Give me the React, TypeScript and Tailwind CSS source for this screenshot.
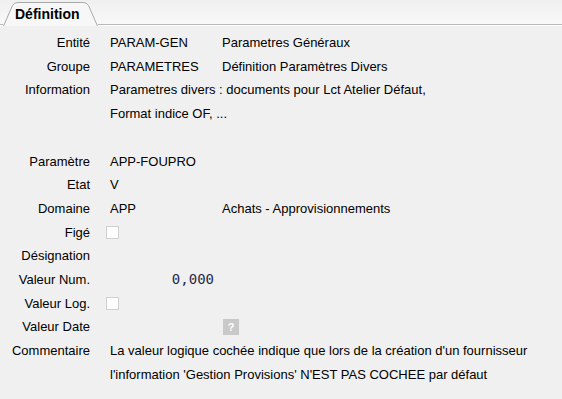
import { ReactNode } from "react";

interface RowProps {
  label?: string;
  value?: ReactNode;
  extra?: ReactNode;
  wide?: ReactNode;
}

const Row = ({ label, value, extra, wide }: RowProps) => {
  return (
    <div className="grid h-[23.7px] grid-cols-[110px_112px_1fr] items-center whitespace-nowrap">
      <div className="pr-[20px] text-right">{label}</div>
      {wide !== undefined ? (
        <div className="col-span-2">{wide}</div>
      ) : (
        <>
          <div className="flex items-center">{value}</div>
          <div className="flex items-center">{extra}</div>
        </>
      )}
    </div>
  );
};

const CheckBox = () => (
  <span className="ml-[-4px] inline-block h-[13px] w-[13px] border border-[#cfcfcf] bg-white" />
);

export default function App() {
  return (
    <div
      className="h-[399px] w-[562px] overflow-hidden bg-[#f0f0f0] text-[13px] text-black"
      style={{ fontFamily: '"Liberation Sans", Arial, sans-serif' }}
    >
      <div className="flex h-[26px] items-end bg-gradient-to-b from-[#f0f0f0] to-[#f9f9f9]">
        <div className="h-[2px] w-[3px] border-t border-[#b9b9b9] bg-white" />
        <div className="relative flex h-[25px] w-[95px] items-center pl-[12px] pt-[1px] text-[14px] font-bold">
          <svg
            className="absolute inset-0"
            width="95"
            height="25"
            viewBox="0 0 95 25"
            fill="none"
          >
            <path
              d="M0.5 25 L9.5 4.5 Q11 1.5 15 1.5 L80 1.5 Q84 1.5 85.5 4.5 L94.5 25"
              stroke="#a9a9a9"
              fill="#f7f7f7"
            />
          </svg>
          <span className="relative">Définition</span>
        </div>
        <div className="h-[2px] flex-1 border-t border-[#b9b9b9] bg-white" />
      </div>

      <div className="pt-[5px]">
        <Row label="Entité" value="PARAM-GEN" extra="Parametres Généraux" />
        <Row label="Groupe" value="PARAMETRES" extra="Définition Paramètres Divers" />
        <Row
          label="Information"
          wide="Parametres divers : documents pour Lct Atelier Défaut,"
        />
        <Row wide="Format indice OF, ..." />
        <Row />
        <Row label="Paramètre" value="APP-FOUPRO" />
        <Row label="Etat" value="V" />
        <Row label="Domaine" value="APP" extra="Achats - Approvisionnements" />
        <Row label="Figé" value={<CheckBox />} />
        <Row label="Désignation" />
        <Row
          label="Valeur Num."
          value={
            <span
              className="ml-auto pr-[8px] text-[14px] text-[#2a2a4a]"
              style={{ fontFamily: '"DejaVu Sans Mono", monospace' }}
            >
              0,000
            </span>
          }
        />
        <Row label="Valeur Log." value={<CheckBox />} />
        <Row
          label="Valeur Date"
          extra={
            <span className="ml-[1px] flex h-[16px] w-[16px] items-center justify-center bg-[#c9c9c9] text-[11px] font-bold text-white">
              ?
            </span>
          }
        />
        <Row
          label="Commentaire"
          wide="La valeur logique cochée indique que lors de la création d'un fournisseur"
        />
        <Row wide="l'information 'Gestion Provisions' N'EST PAS COCHEE par défaut" />
      </div>
    </div>
  );
}
